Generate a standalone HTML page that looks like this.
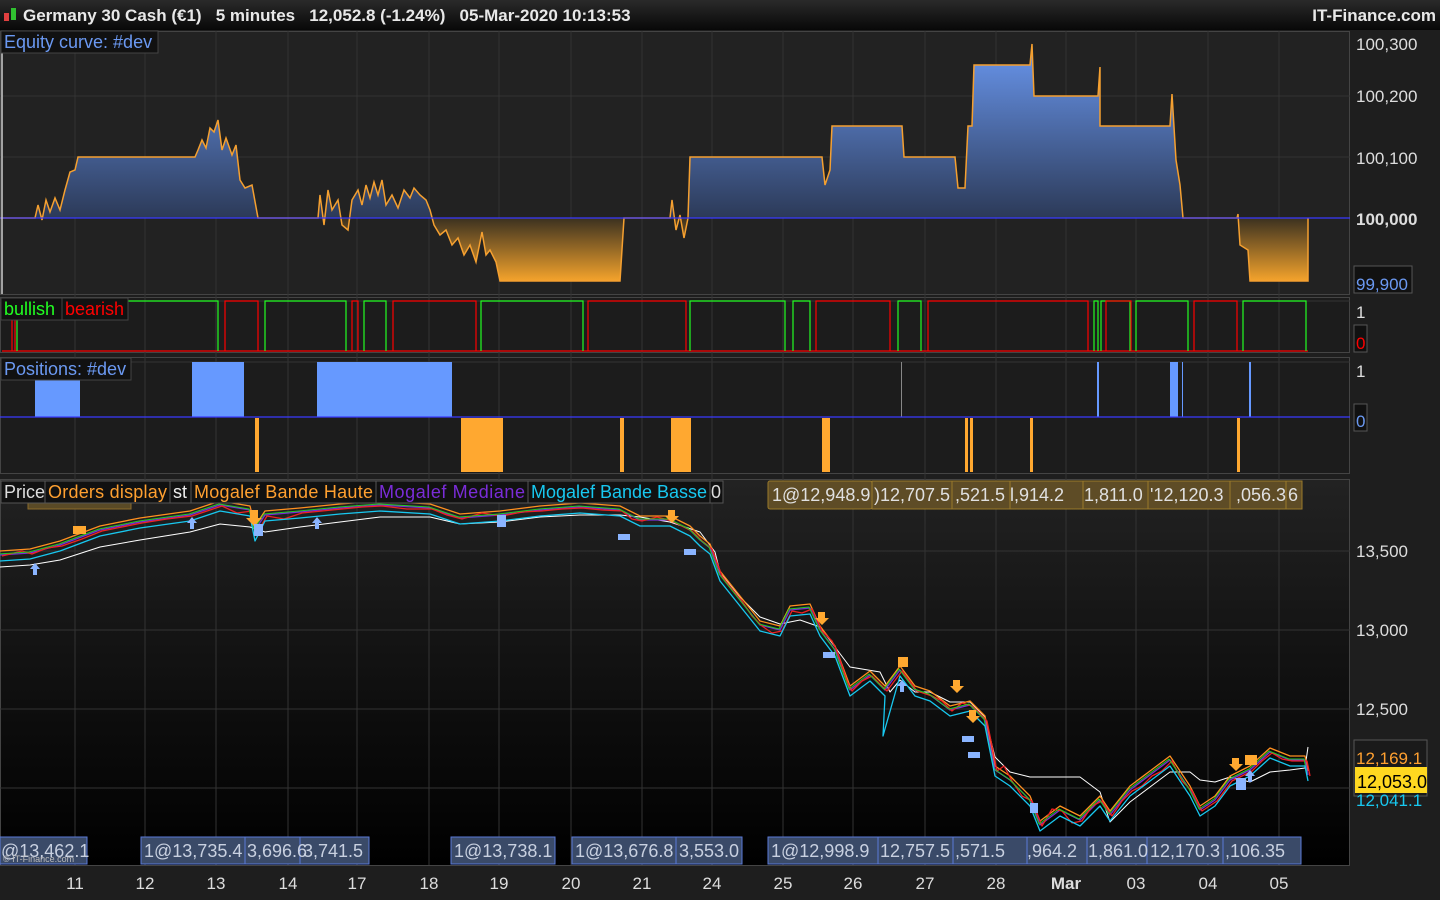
<!DOCTYPE html>
<html><head><meta charset="utf-8"><style>
html,body{margin:0;padding:0;background:#1c1c1c;width:1440px;height:900px;overflow:hidden}
svg{display:block}
text{font-family:"Liberation Sans",sans-serif}
</style></head><body>
<svg width="1440" height="900" viewBox="0 0 1440 900" xmlns="http://www.w3.org/2000/svg">
<defs>
<linearGradient id="top" x1="0" y1="0" x2="0" y2="1"><stop offset="0" stop-color="#2a2a2a"/><stop offset="1" stop-color="#080808"/></linearGradient>
<linearGradient id="eq" gradientUnits="userSpaceOnUse" x1="0" y1="40" x2="0" y2="282">
<stop offset="0" stop-color="#6b99f2"/><stop offset="0.735" stop-color="#2c3a58"/>
<stop offset="0.736" stop-color="#3b3120"/><stop offset="1" stop-color="#f7a52c"/></linearGradient>
<linearGradient id="pp" x1="0" y1="0" x2="0" y2="1"><stop offset="0" stop-color="#222"/><stop offset="1" stop-color="#000"/></linearGradient>
</defs>
<rect x="0" y="0" width="1440" height="900" fill="#1e1e1e"/>
<rect x="0" y="0" width="1440" height="30" fill="url(#top)"/>
<rect x="4" y="13" width="5" height="8" fill="#e04040"/><rect x="11" y="8" width="5" height="12" fill="#30c030"/>
<text x="23" y="21" font-size="17" font-weight="bold" fill="#e8e8e8" xml:space="preserve">Germany 30 Cash (€1)   5 minutes   12,052.8 (-1.24%)   05-Mar-2020 10:13:53</text>
<text x="1436" y="21" font-size="17" font-weight="bold" fill="#e8e8e8" text-anchor="end">IT-Finance.com</text>

<rect x="0" y="31" width="1350" height="263" fill="#222"/>
<rect x="0" y="298" width="1350" height="55" fill="#1c1c1c"/>
<rect x="0" y="358" width="1350" height="116" fill="#1c1c1c"/>
<rect x="0" y="480" width="1350" height="385" fill="url(#pp)"/>
<g stroke="#444" fill="none">
<rect x="0.5" y="31.5" width="1349" height="263"/><rect x="0.5" y="297.5" width="1349" height="55"/>
<rect x="0.5" y="357.5" width="1349" height="116"/><rect x="0.5" y="479.5" width="1349" height="386"/>
</g>
<g stroke="#333" stroke-width="1">
<path d="M75 31V865M145 31V865M216 31V865M288 31V865M357 31V865M429 31V865M499 31V865M571 31V865M642 31V865M712 31V865M783 31V865M853 31V865M925 31V865M996 31V865M1066 31V865M1136 31V865M1208 31V865M1279 31V865"/>
<path d="M0 96H1350M0 157H1350M0 301H1350M0 362H1350M0 551H1350M0 630H1350M0 709H1350M0 788H1350"/>
</g>

<path d="M0 218 L35 218 L38 205 L42 220 L46 200 L50 212 L55 198 L60 210 L65 190 L70 172 L75 170 L78 157 L195 157 L198 150 L202 140 L206 148 L210 128 L214 132 L218 120 L222 150 L226 138 L232 155 L236 145 L240 180 L245 188 L252 185 L258 218 L318 218 L320 195 L324 225 L328 190 L332 210 L338 200 L342 225 L348 230 L352 200 L358 190 L362 205 L366 185 L370 198 L374 182 L378 195 L382 180 L386 205 L392 195 L398 208 L404 190 L410 198 L414 188 L420 195 L426 200 L430 210 L434 225 L440 235 L446 230 L452 245 L458 238 L464 255 L470 245 L476 262 L482 232 L486 255 L490 250 L496 262 L500 281 L620 281 L624 218 L670 218 L672 200 L676 230 L680 215 L684 238 L688 218 L690 157 L822 157 L825 185 L830 170 L832 126 L902 126 L904 157 L955 157 L958 188 L965 188 L968 126 L972 126 L974 65 L1030 65 L1032 44 L1034 96 L1098 96 L1100 67 L1100 126 L1170 126 L1172 94 L1176 160 L1180 185 L1183 218 L1237 218 L1238 214 L1240 245 L1248 250 L1250 281 L1308 281 L1308 218 Z" fill="url(#eq)"/>
<path d="M0 218 L35 218 L38 205 L42 220 L46 200 L50 212 L55 198 L60 210 L65 190 L70 172 L75 170 L78 157 L195 157 L198 150 L202 140 L206 148 L210 128 L214 132 L218 120 L222 150 L226 138 L232 155 L236 145 L240 180 L245 188 L252 185 L258 218 L318 218 L320 195 L324 225 L328 190 L332 210 L338 200 L342 225 L348 230 L352 200 L358 190 L362 205 L366 185 L370 198 L374 182 L378 195 L382 180 L386 205 L392 195 L398 208 L404 190 L410 198 L414 188 L420 195 L426 200 L430 210 L434 225 L440 235 L446 230 L452 245 L458 238 L464 255 L470 245 L476 262 L482 232 L486 255 L490 250 L496 262 L500 281 L620 281 L624 218 L670 218 L672 200 L676 230 L680 215 L684 238 L688 218 L690 157 L822 157 L825 185 L830 170 L832 126 L902 126 L904 157 L955 157 L958 188 L965 188 L968 126 L972 126 L974 65 L1030 65 L1032 44 L1034 96 L1098 96 L1100 67 L1100 126 L1170 126 L1172 94 L1176 160 L1180 185 L1183 218 L1237 218 L1238 214 L1240 245 L1248 250 L1250 281 L1308 281 L1308 218" fill="none" stroke="#f5a030" stroke-width="1.5"/>
<path d="M0 218H1350" stroke="#3a3aff" stroke-width="1.2"/>
<path d="M2 52V294" stroke="#ccc" stroke-width="1.5"/>
<rect x="1" y="31" width="157" height="22" fill="#111" stroke="#444"/>
<text x="4" y="48" font-size="18" fill="#6b99f2">Equity curve: #dev</text>

<g font-size="17" fill="#ddd">
<text x="1356" y="50">100,300</text><text x="1356" y="102">100,200</text><text x="1356" y="164">100,100</text>
<text x="1356" y="225" font-weight="bold">100,000</text>
</g>
<rect x="1354" y="266" width="58" height="27" fill="#111" stroke="#555"/>
<text x="1356" y="290" font-size="17" fill="#6b99f2">99,900</text>
<text x="1356" y="318" font-size="17" fill="#ddd">1</text>
<rect x="1354" y="325" width="13" height="27" fill="#111" stroke="#555"/>
<text x="1356" y="349" font-size="17" fill="#f00">0</text>
<text x="1356" y="377" font-size="17" fill="#ddd">1</text>
<rect x="1354" y="404" width="13" height="27" fill="#111" stroke="#555"/>
<text x="1356" y="427" font-size="17" fill="#6b99f2">0</text>

<path d="M2 351H1308" stroke="#f00" stroke-width="1.2"/>
<g fill="none" stroke-width="1.2">
<path stroke="#2f2" d="M17 351V301H218V351M265 351V301H346V351M364 351V301H386V351M481 351V301H583V351M690 351V301H785V351M793 351V301H810V351M898 351V301H921V351M1094 351V301H1098V351M1101 351V301H1130V351M1136 351V301H1188V351M1243 351V301H1306V351"/>
<path stroke="#f00" d="M12 351V318H15V351M225 351V301H258V351M352 351V301H358V351M393 351V301H476V351M588 351V301H686V351M816 351V301H890V351M928 351V301H1088V351M1106 351V301H1131V351M1194 351V301H1237V351"/>
</g>
<rect x="1" y="298" width="61" height="22" fill="#111" stroke="#444"/><rect x="62" y="298" width="66" height="22" fill="#111" stroke="#444"/>
<text x="4" y="315" font-size="18" fill="#2f2">bullish</text><text x="65" y="315" font-size="18" fill="#f00">bearish</text>

<g fill="#6699ff">
<rect x="35" y="378" width="45" height="39"/><rect x="192" y="362" width="52" height="55"/><rect x="317" y="362" width="135" height="55"/>
<rect x="1097" y="362" width="2" height="55"/><rect x="1170" y="362" width="8" height="55"/><rect x="1182" y="362" width="1" height="55"/><rect x="1249" y="362" width="2" height="55"/>
</g>
<rect x="901" y="362" width="1" height="55" fill="#888"/>
<g fill="#ffa830">
<rect x="255" y="418" width="4" height="54"/><rect x="461" y="418" width="42" height="54"/><rect x="620" y="418" width="4" height="54"/><rect x="671" y="418" width="20" height="54"/>
<rect x="822" y="418" width="8" height="54"/><rect x="965" y="418" width="3" height="54"/><rect x="970" y="418" width="3" height="54"/><rect x="1030" y="418" width="3" height="54"/><rect x="1237" y="418" width="3" height="54"/>
</g>
<path d="M0 417H1350" stroke="#3a3aff" stroke-width="1.2"/>
<rect x="1" y="358" width="130" height="22" fill="#111" stroke="#444"/>
<text x="4" y="375" font-size="18" fill="#6b99f2">Positions: #dev</text>

<g fill="none" stroke-linejoin="round">
<polyline stroke="#fff" stroke-width="1" transform="translate(0,12)" points="0,555 30,553 60,548 100,535 140,528 190,520 220,512 250,515 265,520 300,515 340,510 380,505 430,505 460,512 500,510 540,505 580,503 620,503 640,505 670,510 700,520 715,540 720,560 740,585 760,605 780,612 800,608 820,615 835,635 850,655 880,660 890,680 900,668 915,680 930,680 950,690 970,690 985,705 995,745 1010,760 1030,765 1060,765 1080,765 1100,780 1110,810 1130,790 1150,775 1170,760 1190,760 1200,768 1215,770 1230,765 1250,770 1270,760 1290,758 1305,756 1308,735"/>
<polyline stroke="#ff9020" stroke-width="1.3" transform="translate(0,-4)" points="0,555 30,553 60,545 100,530 140,522 190,515 220,505 250,510 255,530 265,515 300,512 340,508 380,505 430,508 460,518 500,515 540,510 580,507 620,510 640,520 670,520 690,530 700,540 710,548 720,575 740,600 760,625 780,630 790,610 810,608 820,630 835,650 850,690 870,675 885,690 900,670 915,690 930,695 950,710 970,705 985,720 995,770 1010,780 1030,800 1040,825 1060,810 1080,820 1100,800 1110,815 1130,790 1150,775 1170,760 1190,790 1200,810 1215,800 1230,780 1250,770 1270,752 1290,760 1305,760 1308,775"/>
<polyline stroke="#7a2cd8" stroke-width="1.3" points="0,555 30,553 60,545 100,530 140,522 190,515 220,505 250,510 255,530 265,515 300,512 340,508 380,505 430,508 460,518 500,515 540,510 580,507 620,510 640,520 670,520 690,530 700,540 710,548 720,575 740,600 760,625 780,630 790,610 810,608 820,630 835,650 850,690 870,675 885,690 900,670 915,690 930,695 950,710 970,705 985,720 995,770 1010,780 1030,800 1040,825 1060,810 1080,820 1100,800 1110,815 1130,790 1150,775 1170,760 1190,790 1200,810 1215,800 1230,780 1250,770 1270,752 1290,760 1305,760 1308,775"/>
<polyline stroke="#e22" stroke-width="1.3" transform="translate(2,1)" points="0,555 20,550 30,553 45,547 60,545 80,538 100,530 120,526 140,522 165,518 190,515 205,510 220,505 235,512 250,510 255,532 265,515 282,518 300,512 320,510 340,508 360,506 380,505 405,508 430,508 445,514 460,518 480,512 500,515 520,511 540,510 560,508 580,507 600,509 620,510 630,518 640,520 655,516 670,520 690,530 700,540 710,548 720,575 730,588 740,600 750,615 760,625 770,632 780,630 790,610 800,612 810,608 820,630 830,640 835,650 845,680 850,690 860,680 870,675 885,690 900,670 915,690 930,695 940,700 950,710 960,702 970,705 985,720 995,770 1002,765 1010,780 1020,795 1030,800 1040,825 1050,808 1060,810 1070,822 1080,820 1090,805 1100,800 1110,815 1120,800 1130,790 1140,785 1150,775 1160,770 1170,760 1180,780 1190,790 1200,810 1215,800 1230,780 1240,775 1250,770 1260,760 1270,752 1280,758 1290,760 1305,760 1308,775"/>
<polyline stroke="#2c2" stroke-width="1" transform="translate(-1,-1)" points="0,555 30,553 60,545 100,530 140,522 190,515 220,505 250,510 255,530 265,515 300,512 340,508 380,505 430,508 460,518 500,515 540,510 580,507 620,510 640,520 670,520 690,530 700,540 710,548 720,575 740,600 760,625 780,630 790,610 810,608 820,630 835,650 850,690 870,675 885,690 900,670 915,690 930,695 950,710 970,705 985,720 995,770 1010,780 1030,800 1040,825 1060,810 1080,820 1100,800 1110,815 1130,790 1150,775 1170,760 1190,790 1200,810 1215,800 1230,780 1250,770 1270,752 1290,760 1305,760 1308,775"/>
<polyline stroke="#18c8f0" stroke-width="1.3" transform="translate(0,6)" points="0,555 30,553 60,545 100,530 140,522 190,515 220,505 250,510 255,535 265,515 300,512 340,508 380,505 430,508 460,518 500,515 540,510 580,507 620,510 640,520 670,520 690,530 700,540 710,548 720,575 740,600 760,625 780,630 790,610 810,608 820,630 835,650 850,690 870,675 885,690 883,730 900,670 915,690 930,695 950,710 970,705 985,720 995,770 1010,780 1030,800 1040,825 1060,810 1080,820 1100,800 1110,815 1130,790 1150,775 1170,760 1190,790 1200,810 1215,800 1230,780 1250,770 1270,752 1290,760 1305,760 1308,775"/>
</g>
<g fill="#ffa830">
<rect x="73" y="526" width="13" height="8"/><rect x="1245" y="755" width="12" height="10"/><rect x="898" y="657" width="10" height="10"/>
<path d="M250 510h8v8h4l-8 8-8-8h4z"/><path d="M668 510h7v6h4l-7 7-7-7h3z"/><path d="M818 612h7v6h4l-7 7-7-7h3z"/><path d="M953 680h7v6h4l-7 7-7-7h3z"/><path d="M1232 758h7v6h4l-7 7-7-7h3z"/><path d="M969 710h7v6h4l-7 7-7-7h3z"/>
</g>
<g fill="#8ab4ff">
<path d="M35 563l5 6h-3v6h-4v-6h-3z"/><path d="M192 517l5 6h-3v6h-4v-6h-3z"/><path d="M317 517l5 6h-3v6h-4v-6h-3z"/><path d="M902 680l5 6h-3v6h-4v-6h-3z"/><path d="M1250 770l5 6h-3v6h-4v-6h-3z"/>
<rect x="618" y="534" width="12" height="6"/><rect x="684" y="549" width="12" height="6"/><rect x="823" y="652" width="12" height="6"/><rect x="962" y="736" width="12" height="6"/><rect x="968" y="752" width="12" height="6"/>
<rect x="254" y="524" width="9" height="12"/><rect x="497" y="515" width="9" height="12"/><rect x="1236" y="778" width="10" height="12"/><rect x="1030" y="803" width="8" height="10"/>
</g>
<rect x="28" y="503" width="103" height="6" fill="#5a4a26" stroke="#8a6a2a"/>
<g fill="#5e4c26" stroke="#9a7a2a">
<rect x="768" y="481" width="104" height="28" rx="2"/><rect x="872" y="481" width="80" height="28"/><rect x="952" y="481" width="58" height="28"/><rect x="1010" y="481" width="73" height="28"/><rect x="1083" y="481" width="65" height="28"/><rect x="1148" y="481" width="82" height="28"/><rect x="1230" y="481" width="56" height="28"/><rect x="1286" y="481" width="16" height="28"/>
</g>
<g font-size="18" fill="#e0e0e0">
<text x="772" y="501">1@12,948.9</text><text x="874" y="501">)12,707.5</text><text x="955" y="501">,521.5</text><text x="1010" y="501">l,914.2</text><text x="1084" y="501">1,811.0</text><text x="1150" y="501">'12,120.3</text><text x="1236" y="501">,056.3</text><text x="1288" y="501">6</text>
</g>
<g fill="#111" stroke="#555">
<rect x="1" y="481" width="44" height="22"/><rect x="45" y="481" width="125" height="22"/><rect x="170" y="481" width="21" height="22"/><rect x="191" y="481" width="185" height="22"/><rect x="376" y="481" width="152" height="22"/><rect x="528" y="481" width="182" height="22"/><rect x="710" y="481" width="13" height="22"/>
</g>
<g font-size="18">
<text x="4" y="498" fill="#ddd">Price</text><text x="48" y="498" fill="#ffa030" textLength="119">Orders display</text><text x="173" y="498" fill="#eee">st</text><text x="194" y="498" fill="#ffa030" textLength="179">Mogalef Bande Haute</text><text x="379" y="498" fill="#7a2cd8" textLength="146">Mogalef Mediane</text><text x="531" y="498" fill="#18c8f0" textLength="176">Mogalef Bande Basse</text><text x="711" y="498" fill="#ddd">0</text>
</g>
<g font-size="17" fill="#ddd">
<text x="1356" y="557">13,500</text><text x="1356" y="636">13,000</text><text x="1356" y="715">12,500</text>
</g>
<rect x="1354" y="740" width="73" height="56" fill="#1a1a1a" stroke="#555"/>
<text x="1356" y="764" font-size="17" fill="#ffa030">12,169.1</text>
<text x="1356" y="806" font-size="17" fill="#18c8f0">12,041.1</text>
<rect x="1355" y="767" width="72" height="26" fill="#ffd820"/>
<text x="1357" y="788" font-size="18" fill="#000">12,053.0</text>
<g fill="#3a4a68" stroke="#5a7ad8">
<rect x="0" y="837" width="87" height="27"/><rect x="141" y="837" width="104" height="27"/><rect x="245" y="837" width="55" height="27"/><rect x="300" y="837" width="69" height="27"/>
<rect x="451" y="837" width="104" height="27"/><rect x="572" y="837" width="104" height="27"/><rect x="676" y="837" width="66" height="27"/>
<rect x="768" y="837" width="110" height="27"/><rect x="878" y="837" width="75" height="27"/><rect x="953" y="837" width="74" height="27"/><rect x="1027" y="837" width="60" height="27"/><rect x="1087" y="837" width="60" height="27"/><rect x="1147" y="837" width="76" height="27"/><rect x="1223" y="837" width="78" height="27"/>
</g>
<g font-size="18" fill="#c8d0e0">
<text x="1" y="857">@13,462.1</text><text x="144" y="857">1@13,735.4</text><text x="247" y="857">3,696.6</text><text x="303" y="857">3,741.5</text>
<text x="454" y="857">1@13,738.1</text><text x="575" y="857">1@13,676.8</text><text x="679" y="857">3,553.0</text>
<text x="771" y="857">1@12,998.9</text><text x="880" y="857">12,757.5</text><text x="955" y="857">,571.5</text><text x="1027" y="857">,964.2</text><text x="1088" y="857">1,861.0</text><text x="1150" y="857">12,170.3</text><text x="1225" y="857">,106.35</text>
</g>
<text x="3" y="862" font-size="9" fill="#bbb">© IT-Finance.com</text>
<g font-size="17" fill="#ddd" text-anchor="middle">
<text x="75" y="889">11</text><text x="145" y="889">12</text><text x="216" y="889">13</text><text x="288" y="889">14</text><text x="357" y="889">17</text><text x="429" y="889">18</text><text x="499" y="889">19</text><text x="571" y="889">20</text><text x="642" y="889">21</text><text x="712" y="889">24</text><text x="783" y="889">25</text><text x="853" y="889">26</text><text x="925" y="889">27</text><text x="996" y="889">28</text><text x="1066" y="889" font-weight="bold">Mar</text><text x="1136" y="889">03</text><text x="1208" y="889">04</text><text x="1279" y="889">05</text>
</g>
</svg>
</body></html>
